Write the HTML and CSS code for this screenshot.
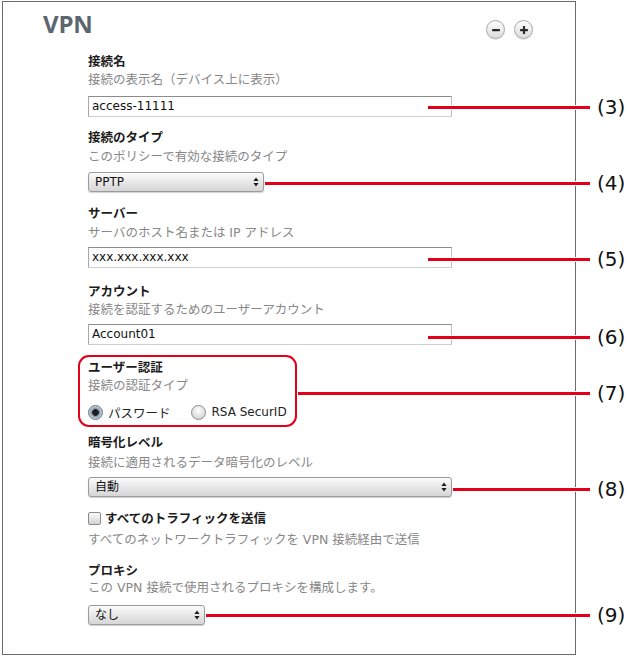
FILE: index.html
```html
<!DOCTYPE html>
<html lang="ja">
<head>
<meta charset="utf-8">
<title>VPN</title>
<link rel="stylesheet" href="styles.css">
</head>
<body>
<div class="page">
  <div class="panel">
    <div class="head">
      <h1 class="title">VPN</h1>
      <div class="pm">
        <span class="pm-btn"><svg width="10" height="10" viewBox="0 0 10 10"><rect x="1" y="4" width="8" height="2.2" rx="0.6" fill="#2b2b2b"/></svg></span>
        <span class="pm-btn"><svg width="10" height="10" viewBox="0 0 10 10"><rect x="1" y="4" width="8" height="2.2" rx="0.6" fill="#2b2b2b"/><rect x="3.9" y="1" width="2.2" height="8" rx="0.6" fill="#2b2b2b"/></svg></span>
      </div>
    </div>

    <div class="form">
      <div class="field f1">
        <div class="label">接続名</div>
        <div class="desc">接続の表示名（デバイス上に表示）</div>
        <div class="input wide">access-11111</div>
      </div>

      <div class="field f2">
        <div class="label">接続のタイプ</div>
        <div class="desc">このポリシーで有効な接続のタイプ</div>
        <div class="select s-type"><span>PPTP</span><svg class="arr" width="6" height="10" viewBox="0 0 6 10"><path d="M3 0.5 L5.6 4 H0.4 Z M3 9.5 L5.6 6 H0.4 Z" fill="#1e1e1e"/></svg></div>
      </div>

      <div class="field f3">
        <div class="label">サーバー</div>
        <div class="desc">サーバのホスト名または IP アドレス</div>
        <div class="input wide">xxx.xxx.xxx.xxx</div>
      </div>

      <div class="field f4">
        <div class="label">アカウント</div>
        <div class="desc">接続を認証するためのユーザーアカウント</div>
        <div class="input wide">Account01</div>
      </div>

      <div class="field auth">
        <div class="label">ユーザー認証</div>
        <div class="desc">接続の認証タイプ</div>
        <div class="radios">
          <span class="radio on"></span><span class="rtext">パスワード</span>
          <span class="radio"></span><span class="rtext latin">RSA SecurID</span>
        </div>
      </div>

      <div class="field f6">
        <div class="label">暗号化レベル</div>
        <div class="desc">接続に適用されるデータ暗号化のレベル</div>
        <div class="select s-wide"><span>自動</span><svg class="arr" width="6" height="10" viewBox="0 0 6 10"><path d="M3 0.5 L5.6 4 H0.4 Z M3 9.5 L5.6 6 H0.4 Z" fill="#1e1e1e"/></svg></div>
      </div>

      <div class="field f7">
        <div class="check-row"><span class="check"></span><span class="label inline">すべてのトラフィックを送信</span></div>
        <div class="desc d7">すべてのネットワークトラフィックを VPN 接続経由で送信</div>
      </div>

      <div class="field f8">
        <div class="label">プロキシ</div>
        <div class="desc d8">この VPN 接続で使用されるプロキシを構成します。</div>
        <div class="select s-proxy"><span>なし</span><svg class="arr" width="6" height="10" viewBox="0 0 6 10"><path d="M3 0.5 L5.6 4 H0.4 Z M3 9.5 L5.6 6 H0.4 Z" fill="#1e1e1e"/></svg></div>
      </div>
    </div>
  </div>

  <div class="callout c3"><span class="line"></span><span class="num">(3)</span></div>
  <div class="callout c4"><span class="line"></span><span class="num">(4)</span></div>
  <div class="callout c5"><span class="line"></span><span class="num">(5)</span></div>
  <div class="callout c6"><span class="line"></span><span class="num">(6)</span></div>
  <div class="callout c7"><span class="line"></span><span class="num">(7)</span></div>
  <div class="callout c8"><span class="line"></span><span class="num">(8)</span></div>
  <div class="callout c9"><span class="line"></span><span class="num">(9)</span></div>
</div>
</body>
</html>
```

FILE: styles.css
```css
html, body {
  margin: 0;
  padding: 0;
  background: #ffffff;
}
body {
  font-family: "DejaVu Sans", "Noto Sans CJK JP", sans-serif;
  color: #1c1c1c;
  width: 629px;
  height: 657px;
  overflow: hidden;
}
.page {
  position: relative;
  width: 629px;
  height: 657px;
}
.panel {
  box-sizing: border-box;
  margin: 1px 0 0 2px;
  width: 574px;
  height: 654px;
  border: 1px solid #6f6a66;
  background: #fff;
}
.head {
  display: flex;
  justify-content: space-between;
  align-items: flex-start;
  padding: 6px 42px 0 40px;
}
.title {
  margin: 0;
  font-family: "Open Sans", sans-serif;
  font-weight: 700;
  font-size: 24px;
  line-height: 32px;
  color: #5b6670;
  letter-spacing: -0.2px;
}
.pm {
  display: flex;
  gap: 9px;
  margin-top: 12px;
}
.pm-btn {
  box-sizing: border-box;
  width: 19px;
  height: 19px;
  border-radius: 50%;
  border: 1px solid #a9a9a9;
  background: linear-gradient(#fdfdfd, #dcdcdc);
  display: flex;
  align-items: center;
  justify-content: center;
  box-shadow: 0 1px 1px rgba(0,0,0,0.12);
}
.form {
  margin: 11px 0 0 85px;
  display: flex;
  flex-direction: column;
  align-items: flex-start;
}
.field {
  display: flex;
  flex-direction: column;
  align-items: flex-start;
}
.label {
  font-family: "Noto Sans CJK JP", sans-serif;
  font-weight: 700;
  font-size: 12.5px;
  line-height: 20px;
  color: #1c1c1c;
}
.desc {
  font-size: 12.5px;
  line-height: 18px;
  color: #878787;
  white-space: nowrap;
}
.input {
  box-sizing: border-box;
  height: 21px;
  border: 1px solid #cfcfcf;
  border-top-color: #8c8c8c;
  border-left-color: #a8a8a8;
  border-right-color: #bdbdbd;
  background: #fff;
  font-size: 12px;
  line-height: 19px;
  padding-left: 3px;
  color: #111;
}
.input.wide { width: 364px; }

.select {
  box-sizing: border-box;
  height: 20px;
  border: 1px solid #9b9b9b;
  border-radius: 3px;
  background: linear-gradient(#fbfbfb, #e6e6e6 55%, #d6d6d6);
  box-shadow: 0 1px 1px rgba(0,0,0,0.18);
  display: flex;
  align-items: center;
  justify-content: space-between;
  padding: 0 4px 0 6px;
  font-size: 12px;
  color: #111;
}
.select span { line-height: 18px; }
.s-type { width: 176px; }
.s-wide { width: 364px; }
.s-proxy { width: 117px; }

.f1 .desc { margin-top: 0; }
.f1 .input { margin-top: 7px; }
.f2 { margin-top: 10px; }
.f2 .desc { margin-top: 1px; }
.f2 .select { margin-top: 6px; }
.f3 { margin-top: 11px; }
.f3 .desc { margin-top: 1px; }
.f3 .input { margin-top: 5px; }
.f4 { margin-top: 13px; }
.f4 .input { margin-top: 5px; }

.auth {
  box-sizing: border-box;
  margin: 10px 0 0 -10px;
  width: 219px;
  height: 72px;
  border: 2px solid #e3001b;
  border-radius: 11px;
  padding: 0 0 0 8px;
}
.radios {
  margin-top: 7px;
  display: flex;
  align-items: center;
  height: 20px;
  font-size: 12px;
  color: #222;
}
.radio {
  box-sizing: border-box;
  width: 15px;
  height: 15px;
  border-radius: 50%;
  border: 1px solid #8d8d8d;
  background: radial-gradient(circle at 50% 35%, #ffffff, #d9d9d9 70%, #c4c4c4);
  flex: none;
}
.radio.on {
  background: radial-gradient(circle, #1f1f1f 0, #1f1f1f 3px, #7f93a8 3.6px, #c9d3de 6.5px);
  border-color: #6d7884;
}
.rtext { margin-left: 5px; margin-right: 20px; font-family: "Noto Sans CJK JP", sans-serif; font-size: 12.5px; }
.rtext.latin { font-family: "DejaVu Sans", sans-serif; font-size: 12px; margin-left: 6px; margin-right: 0; }

.f6 { margin-top: 5px; }
.f6 .desc { margin-top: 2px; }
.f6 .select { margin-top: 5px; }

.f7 { margin-top: 11px; }
.check-row {
  display: flex;
  align-items: center;
  height: 20px;
}
.check {
  box-sizing: border-box;
  width: 13px;
  height: 13px;
  border: 1px solid #8b8b8b;
  border-radius: 2px;
  background: linear-gradient(#fbfbfb, #d3d3d3);
  margin-right: 4px;
}
.label.inline { line-height: 20px; }
.d7 { margin-top: 3px; }

.f8 { margin-top: 11px; }
.d8 { margin-top: -1px; }
.f8 .select { margin-top: 8px; }

/* annotation callouts */
.callout {
  position: absolute;
  display: flex;
  align-items: center;
  height: 24px;
}
.line {
  display: block;
  height: 3px;
  background: #e3001b;
  box-shadow: 0 1px 0 #fff, 0 -1px 0 #fff;
}
.num {
  margin-left: 7px;
  font-family: "DejaVu Sans", sans-serif;
  font-size: 20px;
  line-height: 24px;
  color: #111;
}
.c3 { left: 428px; top: 94px; }
.c3 .line { width: 162px; }
.c4 { left: 265px; top: 170px; }
.c4 .line { width: 325px; }
.c5 { left: 428px; top: 246px; }
.c5 .line { width: 162px; }
.c6 { left: 428px; top: 324px; }
.c6 .line { width: 162px; }
.c7 { left: 298px; top: 380px; }
.c7 .line { width: 292px; }
.c8 { left: 453px; top: 476px; }
.c8 .line { width: 137px; }
.c9 { left: 206px; top: 602px; }
.c9 .line { width: 384px; }
```
